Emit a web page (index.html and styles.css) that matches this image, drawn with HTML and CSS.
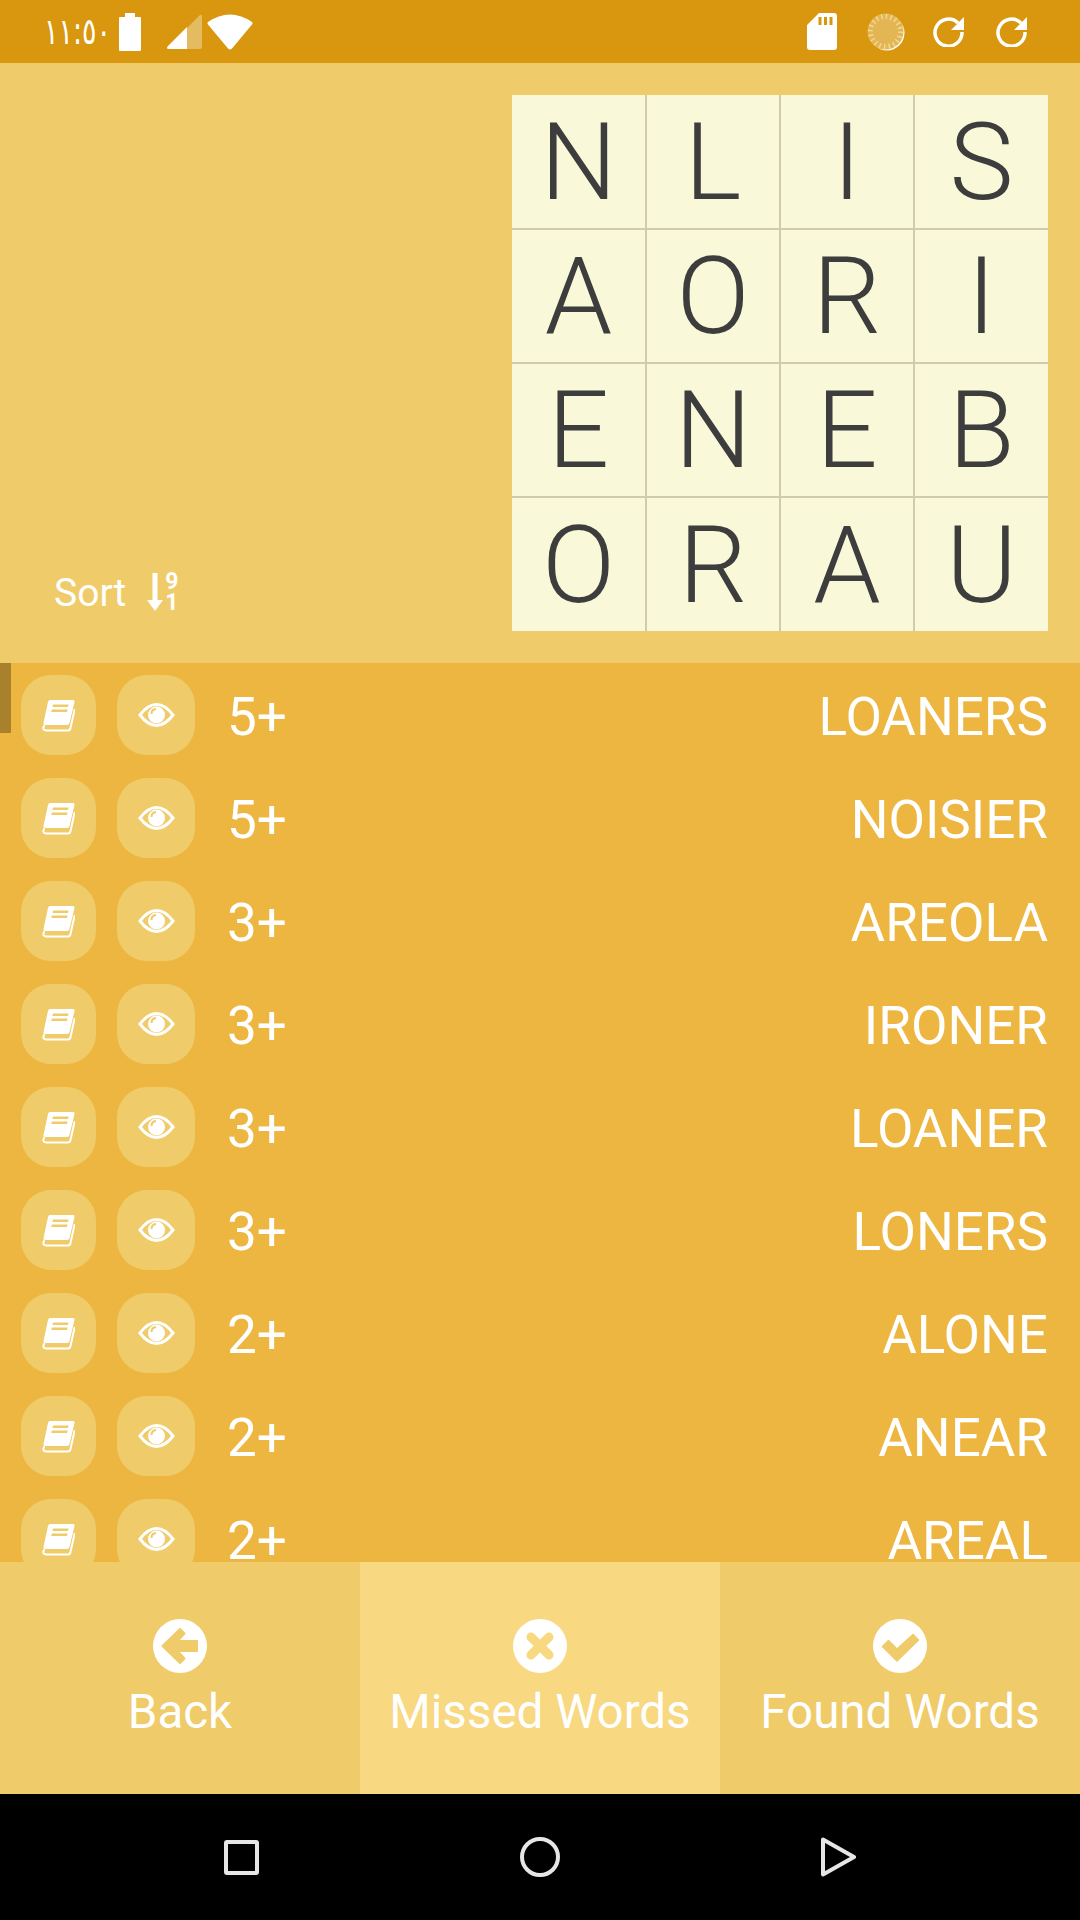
FILE: index.html
```html
<!DOCTYPE html>
<html lang="en">
<head>
  <meta charset="UTF-8">
  <title>Missed Words</title>
  <link rel="stylesheet" href="styles.css">
</head>
<body>

<svg class="defs" width="0" height="0">
  <symbol id="book" viewBox="0 0 33 33">
    <path fill="#fff" fill-rule="evenodd" d="M8 1H31Q33 1 32.500 3L27.500 24Q27 26 25 26H3Q1 26 1.500 24L6 3Q6.500 1 8 1ZM11 5.500L10.400 8H26L26.600 5.500ZM9.900 10.500L9.300 13H25L25.600 10.500Z"/>
    <path fill="none" stroke="#fff" stroke-width="2" stroke-linecap="round" d="M2 27Q0 31 4 31.500H26Q28 31.500 28.500 29L32.500 11"/>
  </symbol>
  <symbol id="eye" viewBox="0 0 37 24">
    <path fill="none" stroke="#fff" stroke-width="3" d="M2 12C8 4 14 1.500 18.500 1.500S29 4 35 12C29 20 23 22.500 18.500 22.500S8 20 2 12Z"/>
    <circle cx="18.500" cy="12" r="8.500" fill="#fff"/>
    <path fill="none" stroke="#efcb69" stroke-width="2" d="M13.500 11Q13.500 6.500 18 6"/>
  </symbol>
</svg>

<div class="status-bar">
  <div class="status-left">
    <span class="clock">١١:٥٠</span>
    <svg class="ic-battery" width="22" height="38" viewBox="0 0 22 38"><path fill="#fff" d="M6 0H16V4H21Q22 4 22 5V37Q22 38 21 38H1Q0 38 0 37V5Q0 4 1 4H6Z"/></svg>
    <svg class="ic-signal" width="35" height="35" viewBox="0 0 35 35"><path fill="#fff" fill-opacity=".35" d="M20 35V14L33 1Q35 0 35 2V33Q35 35 33 35Z"/><path fill="#fff" d="M20 13V35H1Q-1 34 1 32Z"/></svg>
    <svg class="ic-wifi" width="46" height="37" viewBox="0 0 46 37"><path fill="#fff" d="M1 9Q23 -6 45 9Q46 10 45 11.500L25 35.500Q23 37.500 21 35.500L1 11.500Q0 10 1 9Z"/></svg>
  </div>
  <div class="status-right">
    <svg class="ic-sd" width="30" height="37" viewBox="0 0 30 37"><path fill="#fff" fill-rule="evenodd" d="M12 0H27Q30 0 30 3V34Q30 37 27 37H3Q0 37 0 34V12ZM11.500 4V12H14.500V4ZM17 4V12H20V4ZM22.500 4V12H25.500V4Z"/></svg>
    <svg class="ic-sync" width="38" height="38" viewBox="0 0 38 38">
      <circle cx="20" cy="20" r="17.500" fill="#fff"/>
      <circle cx="18.500" cy="18.500" r="18" fill="#e3b653"/>
      <circle cx="18.500" cy="18.500" r="15" fill="none" stroke="#f1d99a" stroke-width="5" stroke-dasharray="1.500 3.200"/>
    </svg>
    <svg class="ic-refresh" width="31" height="31" viewBox="0 0 31 31"><path fill="none" stroke="#fff" stroke-width="3.500" d="M25 7A13.500 13.500 0 1 0 29 16"/><path fill="#fff" d="M31 1V14H18Z"/></svg>
    <svg width="31" height="31" viewBox="0 0 31 31"><path fill="none" stroke="#fff" stroke-width="3.500" d="M25 7A13.500 13.500 0 1 0 29 16"/><path fill="#fff" d="M31 1V14H18Z"/></svg>
  </div>
</div>

<div class="top-panel">
  <div class="sort">
    <span>Sort</span>
    <svg width="16" height="38" viewBox="0 0 16 38"><path fill="#fff" d="M5.500 0H10.500V27H16L8 38L0 27H5.500Z"/></svg>
    <span class="sort-digits"><b>9</b><b>1</b></span>
  </div>
  <div class="board">
    <div class="cell">N</div><div class="cell">L</div><div class="cell">I</div><div class="cell">S</div>
    <div class="cell">A</div><div class="cell">O</div><div class="cell">R</div><div class="cell">I</div>
    <div class="cell">E</div><div class="cell">N</div><div class="cell">E</div><div class="cell">B</div>
    <div class="cell">O</div><div class="cell">R</div><div class="cell">A</div><div class="cell">U</div>
  </div>
</div>

<div class="word-list">
  <div class="scroll-thumb"></div>
  <div class="word-row">
    <span class="round-btn"><svg class="i-book"><use href="#book"/></svg></span>
    <span class="round-btn wide"><svg class="i-eye"><use href="#eye"/></svg></span>
    <span class="points">5+</span><span class="word">LOANERS</span>
  </div>
  <div class="word-row">
    <span class="round-btn"><svg class="i-book"><use href="#book"/></svg></span>
    <span class="round-btn wide"><svg class="i-eye"><use href="#eye"/></svg></span>
    <span class="points">5+</span><span class="word">NOISIER</span>
  </div>
  <div class="word-row">
    <span class="round-btn"><svg class="i-book"><use href="#book"/></svg></span>
    <span class="round-btn wide"><svg class="i-eye"><use href="#eye"/></svg></span>
    <span class="points">3+</span><span class="word">AREOLA</span>
  </div>
  <div class="word-row">
    <span class="round-btn"><svg class="i-book"><use href="#book"/></svg></span>
    <span class="round-btn wide"><svg class="i-eye"><use href="#eye"/></svg></span>
    <span class="points">3+</span><span class="word">IRONER</span>
  </div>
  <div class="word-row">
    <span class="round-btn"><svg class="i-book"><use href="#book"/></svg></span>
    <span class="round-btn wide"><svg class="i-eye"><use href="#eye"/></svg></span>
    <span class="points">3+</span><span class="word">LOANER</span>
  </div>
  <div class="word-row">
    <span class="round-btn"><svg class="i-book"><use href="#book"/></svg></span>
    <span class="round-btn wide"><svg class="i-eye"><use href="#eye"/></svg></span>
    <span class="points">3+</span><span class="word">LONERS</span>
  </div>
  <div class="word-row">
    <span class="round-btn"><svg class="i-book"><use href="#book"/></svg></span>
    <span class="round-btn wide"><svg class="i-eye"><use href="#eye"/></svg></span>
    <span class="points">2+</span><span class="word">ALONE</span>
  </div>
  <div class="word-row">
    <span class="round-btn"><svg class="i-book"><use href="#book"/></svg></span>
    <span class="round-btn wide"><svg class="i-eye"><use href="#eye"/></svg></span>
    <span class="points">2+</span><span class="word">ANEAR</span>
  </div>
  <div class="word-row">
    <span class="round-btn"><svg class="i-book"><use href="#book"/></svg></span>
    <span class="round-btn wide"><svg class="i-eye"><use href="#eye"/></svg></span>
    <span class="points">2+</span><span class="word">AREAL</span>
  </div>
</div>

<div class="tabs">
  <div class="tab">
    <svg width="54" height="54" viewBox="0 0 54 54"><circle cx="27" cy="27" r="27" fill="#fff"/><path fill="#efcb69" stroke="#efcb69" stroke-width="2" stroke-linejoin="round" d="M9.500 27L27 10L31.500 14.500L24.500 22H44V32H24.500L31.500 39.500L27 44Z"/></svg>
    <span>Back</span>
  </div>
  <div class="tab active">
    <svg width="54" height="54" viewBox="0 0 54 54"><circle cx="27" cy="27" r="27" fill="#fff"/><path fill="none" stroke="#f8d880" stroke-width="9" stroke-linecap="round" d="M18 18L36 36M36 18L18 36"/></svg>
    <span>Missed Words</span>
  </div>
  <div class="tab">
    <svg width="54" height="54" viewBox="0 0 54 54"><circle cx="27" cy="27" r="27" fill="#fff"/><path fill="#efcb69" stroke="#efcb69" stroke-width="1.500" stroke-linejoin="round" d="M15.500 21.500L24 30L40 15.500L45.500 21L24 42L9.500 27.500Z"/></svg>
    <span>Found Words</span>
  </div>
</div>

<div class="nav-bar">
  <svg width="35" height="35" viewBox="0 0 35 35"><rect x="2" y="2" width="31" height="31" rx="1" fill="none" stroke="#e6e6e6" stroke-width="4"/></svg>
  <svg width="40" height="40" viewBox="0 0 40 40"><circle cx="20" cy="20" r="18" fill="none" stroke="#e6e6e6" stroke-width="4"/></svg>
  <svg width="35" height="40" viewBox="0 0 35 40"><path fill="none" stroke="#e6e6e6" stroke-width="4" stroke-linejoin="round" d="M2 2.500L33 20L2 37.500Z"/></svg>
</div>

</body>
</html>
```

FILE: styles.css
```css
* {
  box-sizing: border-box;
}

html, body {
  margin: 0;
  padding: 0;
}

body {
  width: 1080px;
  height: 1920px;
  overflow: hidden;
  font-family: Roboto, sans-serif;
  background: #edb641;
  color: #fff;
}

.defs {
  display: none;
}

.status-bar {
  display: flex;
  justify-content: space-between;
  align-items: center;
  height: 63px;
  padding: 0 53px 0 44px;
  background: #d8970e;
}

.status-left, .status-right {
  display: flex;
  align-items: center;
}

.clock {
  width: 53px;
  margin-right: 22px;
  font-family: "DejaVu Sans", sans-serif;
  font-size: 27px;
  letter-spacing: -2.500px;
  white-space: nowrap;
  direction: ltr;
  unicode-bidi: bidi-override;
  transform: scaleY(1.35);
}

.ic-battery {
  margin-right: 26px;
}

.ic-signal {
  margin-right: 5px;
}

.ic-sd {
  margin-right: 30px;
}

.ic-sync {
  margin-right: 28px;
}

.ic-refresh {
  margin-right: 32px;
}

.top-panel {
  display: flex;
  justify-content: space-between;
  height: 600px;
  padding: 32px 32px 0 54px;
  background: #efcb69;
}

.sort {
  display: flex;
  align-items: center;
  align-self: flex-start;
  margin-top: 475px;
  font-size: 39px;
}

.sort svg {
  margin-left: 21px;
  margin-top: -2px;
}

.sort-digits {
  display: flex;
  flex-direction: column;
  margin-left: 2px;
  margin-top: -2px;
  font-size: 23px;
  line-height: 21px;
}

.board {
  display: grid;
  grid-template-columns: repeat(4, 134px);
  grid-template-rows: repeat(4, 134px);
  width: 536px;
  height: 536px;
  background: #f9f8d8;
}

.cell {
  display: flex;
  align-items: center;
  justify-content: center;
  border: 1px solid #cfcbb0;
  color: #3d3d3d;
  font-size: 108px;
  font-weight: 300;
}

.cell:nth-child(-n+4) {
  border-top: none;
}

.cell:nth-child(n+13) {
  border-bottom: none;
}

.cell:nth-child(4n+1) {
  border-left: none;
}

.cell:nth-child(4n) {
  border-right: none;
}

.word-list {
  position: relative;
  height: 899px;
  overflow: hidden;
  padding-top: 12px;
  background: #edb641;
}

.scroll-thumb {
  position: absolute;
  left: 0;
  top: 0;
  width: 11px;
  height: 70px;
  background: #a9802c;
}

.word-row {
  display: flex;
  align-items: center;
  height: 80px;
  margin-bottom: 23px;
  padding: 0 32px 0 21px;
  font-size: 53px;
}

.round-btn {
  display: flex;
  align-items: center;
  justify-content: center;
  flex: none;
  width: 75px;
  height: 80px;
  margin-right: 21px;
  border-radius: 30px;
  background: #efcb69;
}

.round-btn.wide {
  width: 78px;
  margin-right: 32px;
}

.i-book {
  width: 33px;
  height: 33px;
}

.i-eye {
  width: 37px;
  height: 24px;
}

.points {
  margin-top: 3px;
}

.word {
  margin-top: 3px;
  margin-left: auto;
}

.tabs {
  display: flex;
  height: 232px;
}

.tab {
  display: flex;
  flex-direction: column;
  align-items: center;
  width: 360px;
  padding-top: 57px;
  background: #efcb69;
  font-size: 47.500px;
}

.tab span {
  margin-top: 11px;
}

.tab.active {
  background: #f8d880;
}

.nav-bar {
  display: flex;
  align-items: center;
  justify-content: center;
  gap: 261px;
  height: 126px;
  background: #000;
}
```
